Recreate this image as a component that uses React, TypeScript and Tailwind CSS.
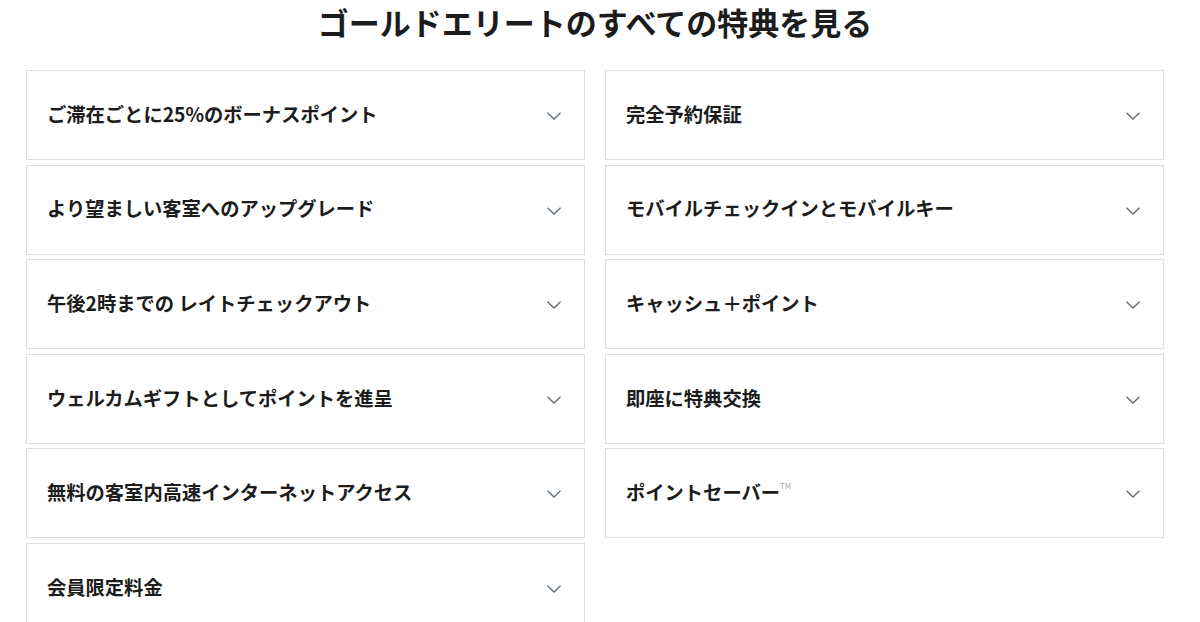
import { ReactNode } from 'react';

const left: ReactNode[] = [
  'ご滞在ごとに25%のボーナスポイント',
  'より望ましい客室へのアップグレード',
  '午後2時までの レイトチェックアウト',
  'ウェルカムギフトとしてポイントを進呈',
  '無料の客室内高速インターネットアクセス',
  '会員限定料金',
];

const right: ReactNode[] = [
  '完全予約保証',
  'モバイルチェックインとモバイルキー',
  'キャッシュ＋ポイント',
  '即座に特典交換',
  <>
    ポイントセーバー<sup className="text-[8px] font-normal text-[#aaa] align-super">TM</sup>
  </>,
];

function Chevron() {
  return (
    <svg width="16" height="10" viewBox="0 0 16 10" fill="none" className="shrink-0 mt-[2px]">
      <path d="M1.5 1.8 L8 8 L14.5 1.8" stroke="#5f6b78" strokeWidth="1.3" />
    </svg>
  );
}

function Row({ label }: { label: ReactNode }) {
  return (
    <div className="h-[90px] border border-[#dedede] flex items-center justify-between pl-[20px] pr-[22px]">
      <span className="text-[19.3px] font-bold text-[#1c1c1c] leading-none mb-[1px]">{label}</span>
      <Chevron />
    </div>
  );
}

export default function App() {
  return (
    <div
      className="w-[1200px] h-[622px] overflow-hidden bg-white"
      style={{ fontFamily: '"Noto Sans CJK JP", "Noto Sans", sans-serif' }}
    >
      <div className="ml-[26px] w-[1138px]">
        <h1 className="text-center text-[31px] font-bold text-[#1c1c1c] leading-[44px] mb-[26px]">
          ゴールドエリートのすべての特典を見る
        </h1>
        <div className="grid grid-cols-2 gap-x-[20px]">
          <div className="flex flex-col gap-[4.6px]">
            {left.map((l, i) => (
              <Row key={i} label={l} />
            ))}
          </div>
          <div className="flex flex-col gap-[4.6px]">
            {right.map((l, i) => (
              <Row key={i} label={l} />
            ))}
          </div>
        </div>
      </div>
    </div>
  );
}
